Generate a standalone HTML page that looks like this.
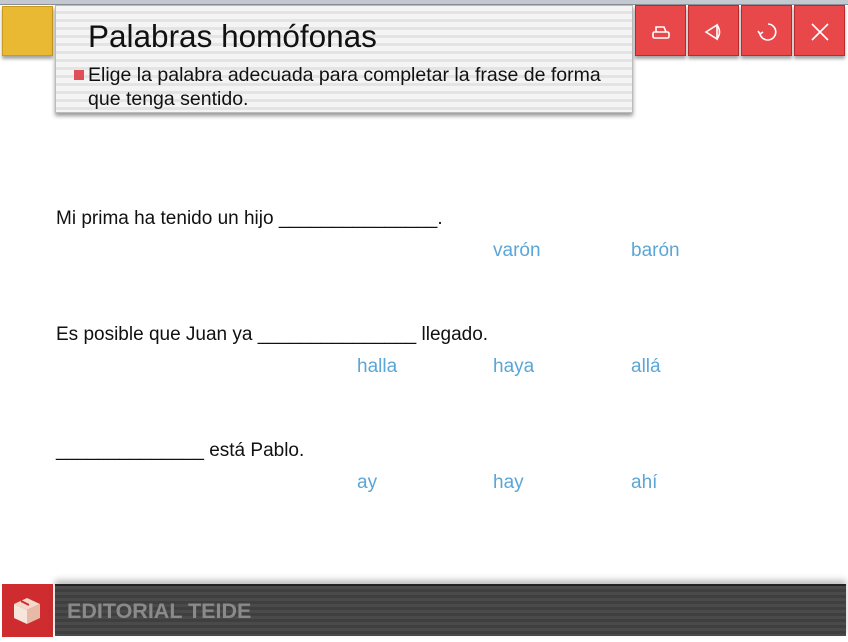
<!DOCTYPE html>
<html><head><meta charset="utf-8"><style>
*{margin:0;padding:0;box-sizing:border-box}
body{width:848px;height:637px;background:#fff;position:relative;overflow:hidden;font-family:"Liberation Sans",Arial,sans-serif}
.top{position:absolute;left:0;top:0;width:848px;height:5px;background:#c4c8d0;border-bottom:1px solid #8a8e96}
.yellow{position:absolute;left:2px;top:6px;width:51px;height:50px;background:#eab934;border:1px solid #c99a22;box-shadow:0 3px 3px rgba(0,0,0,.35)}
.head{position:absolute;left:55px;top:5px;width:578px;height:108px;background:repeating-linear-gradient(#f4f4f4 0 5px,#e4e4e4 5px 8px);border:1px solid #bbb;box-shadow:0 3px 4px rgba(0,0,0,.4)}
.head h1{position:absolute;left:32px;top:12px;font-weight:normal;font-size:31.5px;color:#111}
.head p{position:absolute;left:32px;top:57px;width:535px;font-size:19.5px;line-height:24px;color:#111}
.sq{position:absolute;left:18px;top:64px;width:10px;height:10px;background:#e04e57}
.btn{position:absolute;top:5px;width:51px;height:51px;background:#e9484b;border:1px solid #b92a2c;box-shadow:0 3px 3px rgba(0,0,0,.35)}
.btn svg{position:absolute;left:12px;top:13px}
.q{position:absolute;font-size:19px;color:#111}
.o{position:absolute;font-size:19px;color:#5ba6d6}
.foot{position:absolute;left:55px;top:584px;width:791px;height:52px;background:repeating-linear-gradient(#4a4a4a 0 3px,#3f3f3f 3px 6px);border-top:2px solid #222;box-shadow:0 -4px 6px rgba(0,0,0,.25)}
.foot span{position:absolute;left:12px;top:13px;font-size:21.5px;font-weight:bold;color:#8a8a8a}
.logo{position:absolute;left:2px;top:584px;width:51px;height:53px;background:#cf2c2f}
</style></head><body>
<div class="top"></div>
<div class="yellow"></div>
<div class="head">
<h1>Palabras homófonas</h1>
<div class="sq"></div>
<p>Elige la palabra adecuada para completar la frase de forma que tenga sentido.</p>
</div>
<div class="btn" style="left:635px"><svg width="26" height="26" viewBox="0 0 26 26" fill="none" stroke="#fff" stroke-width="1.6"><rect x="5" y="13" width="16" height="6" rx="1.5"/><path d="M8 13V8h8l2 5"/></svg></div>
<div class="btn" style="left:688px"><svg width="26" height="26" viewBox="0 0 26 26" fill="none" stroke="#fff" stroke-width="1.6"><path d="M5 13l11-7v14z"/><path d="M16 6q5 7 0 14"/></svg></div>
<div class="btn" style="left:741px"><svg width="26" height="26" viewBox="0 0 26 26" fill="none" stroke="#fff" stroke-width="1.6"><path d="M14 5a8 8 0 1 1-8 10"/><path d="M4 12l2 3 3-2"/></svg></div>
<div class="btn" style="left:794px"><svg width="26" height="26" viewBox="0 0 26 26" fill="none" stroke="#fff" stroke-width="1.6"><path d="M5 5l16 16M21 5L5 21"/></svg></div>

<div class="q" style="left:56px;top:208px">Mi prima ha tenido un hijo _______________.</div>
<div class="o" style="left:493px;top:240px">varón</div>
<div class="o" style="left:631px;top:240px">barón</div>

<div class="q" style="left:56px;top:324px">Es posible que Juan ya _______________ llegado.</div>
<div class="o" style="left:357px;top:356px">halla</div>
<div class="o" style="left:493px;top:356px">haya</div>
<div class="o" style="left:631px;top:356px">allá</div>

<div class="q" style="left:56px;top:440px">______________ está Pablo.</div>
<div class="o" style="left:357px;top:472px">ay</div>
<div class="o" style="left:493px;top:472px">hay</div>
<div class="o" style="left:631px;top:472px">ahí</div>

<div class="logo"><svg width="51" height="53" viewBox="0 0 51 53"><path d="M25 14l13 6-13 6-13-6z" fill="#f3d9cc"/><path d="M12 20l13 6v14l-13-6z" fill="#f6e6dc"/><path d="M38 20l-13 6v14l13-6z" fill="#e8b9a6"/><path d="M19 17l8 4" stroke="#cf2c2f" stroke-width="2"/></svg></div>
<div class="foot"><span>EDITORIAL TEIDE</span></div>
</body></html>
